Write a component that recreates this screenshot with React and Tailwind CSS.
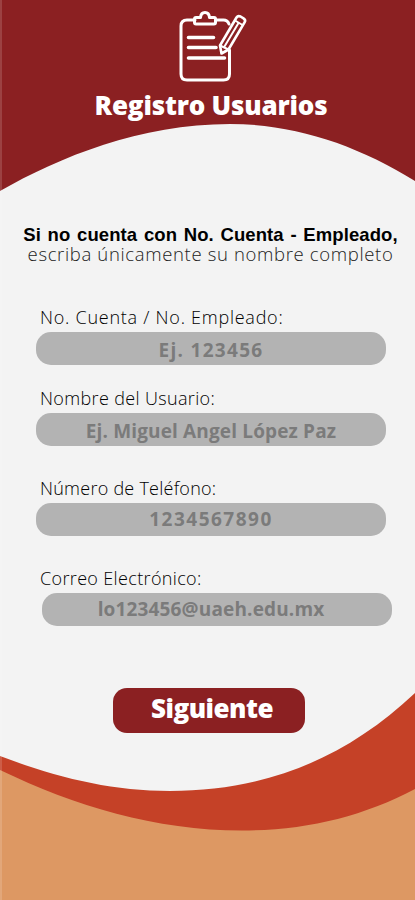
const fields = [
    { id: 'account', label: 'No. Cuenta / No. Empleado:', placeholder: 'Ej. 123456', type: 'text', row: 'mt-[42px]', text: 'tracking-[0.75px]', input: 'pt-[2px] tracking-[1.3px]' },
    { id: 'name', label: 'Nombre del Usuario:', placeholder: 'Ej. Miguel Angel López Paz', type: 'text', row: 'mt-[21px]', text: 'tracking-[0.35px]', input: 'pt-[2px] tracking-[0.15px]' },
    { id: 'phone', label: 'Número de Teléfono:', placeholder: '1234567890', type: 'tel', row: 'mt-[30px]', text: 'tracking-[0.25px]', input: 'pb-px tracking-[1.5px]' },
    { id: 'email', label: 'Correo Electrónico:', placeholder: 'lo123456@uaeh.edu.mx', type: 'email', row: 'mt-[30px]', text: 'tracking-[0.35px]', input: 'ml-1.5 pr-3 pb-px tracking-[0.15px]' },
];

const Background = () => (
    <svg className="absolute inset-0 h-full w-full" viewBox="0 0 415 900" preserveAspectRatio="none" aria-hidden="true">
        <path d="M0 0H415V181C357 145 295 124 230 124C140 124 60 157 0 191Z" fill="#8b2022" />
        <path d="M0 756C55 777 110 791 170 791C265 791 345 759 415 693V900H0Z" fill="#c54127" />
        <path d="M0 770C75 806 155 830.5 242 830.5C305 830.5 362 817 415 789V900H0Z" fill="#dd9863" />
        <rect width="2" height="900" fill="#fff" opacity="0.15" />
    </svg>
);

const ClipboardIcon = () => (
    <svg
        className="ml-1 h-[74px] w-[70px]"
        viewBox="178 10 70 74"
        fill="none"
        stroke="#fff"
        strokeWidth="3"
        strokeLinecap="round"
        strokeLinejoin="round"
        aria-hidden="true"
    >
        <path d="M195 20H187Q181 20 181 26V74Q181 80 187 80H223.500Q229.500 80 229.500 74V50M216 20H223.500Q227.500 20 229 24" />
        <path d="M196 17.500H200.500Q201 12.500 205 12.500Q209 12.500 209.500 17.500H214Q215.500 17.500 215.500 19V22.500Q215.500 24 214 24H196Q194.500 24 194.500 22.500V19Q194.500 17.500 196 17.500Z" />
        <path d="M188.500 37.500H213.500M188.500 47.500H216M188.500 58H224.500" strokeWidth="3.600" />
        <path d="M220 45.500L236.500 17.500Q238 15.200 240.500 16.500L243.500 18.300Q246 20 244.700 22.200L228.500 49.500L221.500 53.500Z" strokeWidth="2.600" />
        <path d="M235 20.500L242.500 25M224.500 46.500L238.500 23M220 45.500L228.500 49.500" strokeWidth="2" />
    </svg>
);

const Field = ({ id, label, placeholder, type, row, text, input }) => (
    <div className={row}>
        <label
            htmlFor={id}
            className={`ml-1 block text-[18px] leading-6 font-light whitespace-nowrap text-black ${text}`}
        >
            {label}
        </label>
        <input
            id={id}
            type={type}
            placeholder={placeholder}
            className={`mt-[3px] block h-[33px] w-[350px] rounded-[15px] bg-[#b3b3b3] text-center text-[19px] font-bold text-[#333] outline-none placeholder:text-[#7b7b7b] placeholder:opacity-100 ${input}`}
        />
    </div>
);

const App = () => {
    return (
        <main className="relative h-[900px] w-[415px] overflow-hidden bg-[#f3f3f3] font-['Open_Sans','Liberation_Sans',sans-serif]">
            <Background />

            <div className="relative flex flex-col">
                {/* Header */}
                <header className="flex flex-col items-center pt-[10px] pl-[7px]">
                    <ClipboardIcon />
                    <h1 className="mt-[3px] text-[26px] leading-9 font-extrabold tracking-[-0.2px] whitespace-nowrap text-white">
                        Registro Usuarios
                    </h1>
                </header>

                {/* Instructions */}
                <p className="mt-[102px] pl-[6px] text-center leading-[19px] whitespace-nowrap text-black">
                    <span className="block font-['Liberation_Sans',sans-serif] text-[18.5px] leading-[19px] font-bold tracking-[0.1px] [word-spacing:1.4px]">
                        Si no cuenta con No. Cuenta - Empleado,
                    </span>
                    <span className="block text-[18.5px] leading-[19px] font-light tracking-[0.65px] text-[#222]">
                        escriba únicamente su nombre completo
                    </span>
                </p>

                {/* Registration form */}
                <form className="flex flex-col pl-9" onSubmit={(e) => e.preventDefault()}>
                    {fields.map((field) => (
                        <Field key={field.id} {...field} />
                    ))}

                    <button
                        type="submit"
                        className="mt-[62px] ml-[77px] h-[45px] w-48 rounded-[14px] bg-[#8b2022] pb-[5px] pl-[6px] text-[26px] leading-9 font-extrabold tracking-[-0.5px] text-white"
                    >
                        Siguiente
                    </button>
                </form>
            </div>
        </main>
    );
};

export default App;
